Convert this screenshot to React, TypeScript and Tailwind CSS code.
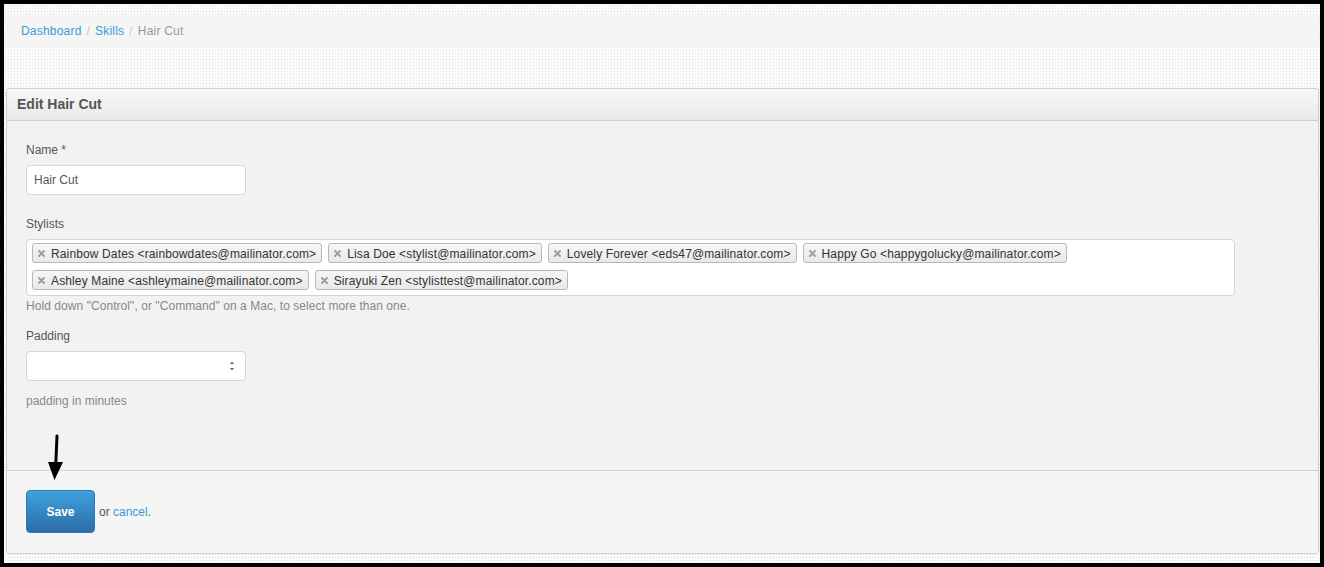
import React from "react";

const stylists = [
  "Rainbow Dates <rainbowdates@mailinator.com>",
  "Lisa Doe <stylist@mailinator.com>",
  "Lovely Forever <eds47@mailinator.com>",
  "Happy Go <happygolucky@mailinator.com>",
  "Ashley Maine <ashleymaine@mailinator.com>",
  "Sirayuki Zen <stylisttest@mailinator.com>",
];

function Chip({ label }: { label: string }) {
  return (
    <div className="flex h-[20px] items-center rounded-[3px] border border-[#b8b8b8] bg-gradient-to-b from-[#f6f6f6] to-[#e9e9e9] pl-[5px] pr-[5px] text-[12px] leading-[12px] tracking-[0.13px] text-[#333]">
      <svg width="7" height="7" viewBox="0 0 7 7" className="shrink-0">
        <path d="M1 1 L6 6 M6 1 L1 6" stroke="#9a9a9a" strokeWidth="1.8" strokeLinecap="round" />
      </svg>
      <span className="ml-[6px] whitespace-nowrap pt-[2px]">{label}</span>
    </div>
  );
}

export default function App() {
  return (
    <div className="h-[567px] w-[1324px] bg-black pb-[4px] pl-[4px] pr-[4px] pt-[4px] font-['Liberation_Sans',Arial,sans-serif]">
      <div className="relative flex h-full w-full flex-col bg-[#fbfbfb] bg-[radial-gradient(circle,#dedede_0.7px,transparent_0.9px)] bg-[length:3px_3px] pl-[2px] pr-[1px]">
        {/* breadcrumb */}
        <div className="mt-[9px] flex h-[35px] items-center rounded-[4px] bg-[#f5f5f5] pl-[15px] text-[12px] leading-[18px] tracking-[0.2px]">
          <span className="text-[#3a9ad9]">Dashboard</span>
          <span className="px-[5px] text-[#cccccc]">/</span>
          <span className="text-[#3a9ad9]">Skills</span>
          <span className="px-[5px] text-[#cccccc]">/</span>
          <span className="text-[#999]">Hair Cut</span>
        </div>

        {/* panel */}
        <div className="mt-[40px] flex h-[466px] flex-col rounded-[3px] border border-[#cfcfcf]">
          <div className="flex h-[32px] items-center rounded-t-[3px] border-b border-[#cfcfcf] bg-gradient-to-b from-[#f8f8f8] to-[#e9e9e9] pl-[10px] text-[14px] font-bold text-[#555]">
            Edit Hair Cut
          </div>
          <div className="flex h-[349px] flex-col bg-[#f2f2f2] pl-[19px] pt-[19px] text-[12px] leading-[18px] text-[#555]">
            <div className="pt-[1px]">Name *</div>
            <div className="mt-[6px] flex h-[30px] w-[220px] items-center rounded-[4px] border border-[#d4d4d4] bg-white pl-[7px] text-[#555]">
              Hair Cut
            </div>
            <div className="mt-[19px] pt-[1px]">Stylists</div>
            <div className="mt-[6px] flex h-[57px] w-[1209px] flex-wrap content-start gap-x-[6px] gap-y-[7px] rounded-[4px] border border-[#d4d4d4] bg-white pl-[5px] pt-[3px]">
              {stylists.map((s) => (
                <Chip key={s} label={s} />
              ))}
            </div>
            <div className="pt-[1px] tracking-[0.06px] text-[#888]">
              Hold down "Control", or "Command" on a Mac, to select more than one.
            </div>
            <div className="mt-[11px] pt-[1px]">Padding</div>
            <div className="mt-[6px] flex h-[30px] w-[220px] items-center justify-end rounded-[4px] border border-[#d4d4d4] bg-white pr-[10px]">
              <svg width="6" height="12" viewBox="0 0 6 12">
                <path d="M3 1.5 L5.5 4 L0.5 4 Z" fill="#777" />
                <path d="M0.5 8 L5.5 8 L3 10.5 Z" fill="#777" />
              </svg>
            </div>
            <div className="mt-[10px] pt-[1px] text-[#888]">padding in minutes</div>
          </div>
          <div className="flex flex-1 items-start rounded-b-[3px] border-t border-[#d4d4d4] bg-[#f5f5f5] pl-[19px] pt-[19px] text-[12px]">
            <button className="h-[43px] w-[69px] rounded-[4px] border border-[#2f78b5] bg-gradient-to-b from-[#3ea2dc] to-[#2c6da7] text-[12px] font-bold text-white">
              Save
            </button>
            <div className="ml-[4px] mt-[13px] text-[#555]">
              or <span className="text-[#3a9ad9]">cancel</span>.
            </div>
          </div>
        </div>

        {/* arrow annotation */}
        <svg className="absolute left-[40px] top-[428px]" width="24" height="52" viewBox="0 0 24 52">
          <path d="M13 4 L11.6 36" stroke="#000" strokeWidth="3" strokeLinecap="round" />
          <path d="M4 30 L19 30 L10.5 48 Z" fill="#000" />
        </svg>
      </div>
    </div>
  );
}
